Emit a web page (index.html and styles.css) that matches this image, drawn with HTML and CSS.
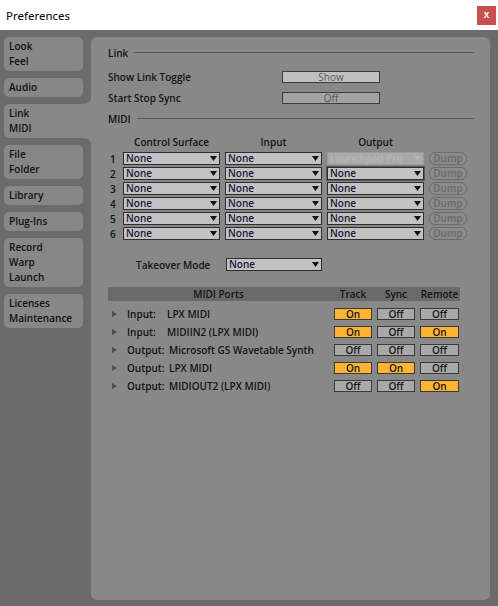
FILE: index.html
```html
<!DOCTYPE html>
<html>
<head>
<meta charset="utf-8">
<title>Preferences</title>
<link rel="stylesheet" href="styles.css">
</head>
<body>
<div class="titlebar">
  <span class="title">Preferences</span>
  <div class="close">x</div>
</div>
<div class="window">
  <nav class="sidebar">
    <div class="tab">Look<br>Feel</div>
    <div class="tab">Audio</div>
    <div class="tab active">Link<br>MIDI</div>
    <div class="tab">File<br>Folder</div>
    <div class="tab">Library</div>
    <div class="tab">Plug-Ins</div>
    <div class="tab">Record<br>Warp<br>Launch</div>
    <div class="tab">Licenses<br>Maintenance</div>
  </nav>
  <main class="panel">
    <div class="sec-head"><span>Link</span><div class="rule"></div></div>
    <div class="setting first">
      <span>Show Link Toggle</span>
      <div class="btn light">Show</div>
    </div>
    <div class="setting">
      <span>Start Stop Sync</span>
      <div class="btn dark">Off</div>
    </div>
    <div class="sec-head midi"><span>MIDI</span><div class="rule"></div></div>

    <div class="midi-grid head">
      <span></span><span class="ch">Control Surface</span><span class="ch">Input</span><span class="ch">Output</span><span></span>
    </div>
    <div class="midi-grid rows">
      <span class="num">1</span>
      <div class="sel"><span>None</span><svg class="arr" viewBox="0 0 7 5"><polygon points="0,0 7,0 3.5,5"/></svg></div>
      <div class="sel"><span>None</span><svg class="arr" viewBox="0 0 7 5"><polygon points="0,0 7,0 3.5,5"/></svg></div>
      <div class="sel disabled"><span>Launchpad Pro</span><svg class="arr" viewBox="0 0 7 5"><polygon points="0,0 7,0 3.5,5"/></svg></div>
      <div class="dump">Dump</div>

      <span class="num">2</span>
      <div class="sel"><span>None</span><svg class="arr" viewBox="0 0 7 5"><polygon points="0,0 7,0 3.5,5"/></svg></div>
      <div class="sel"><span>None</span><svg class="arr" viewBox="0 0 7 5"><polygon points="0,0 7,0 3.5,5"/></svg></div>
      <div class="sel focus"><span>None</span><svg class="arr" viewBox="0 0 7 5"><polygon points="0,0 7,0 3.5,5"/></svg></div>
      <div class="dump">Dump</div>

      <span class="num">3</span>
      <div class="sel"><span>None</span><svg class="arr" viewBox="0 0 7 5"><polygon points="0,0 7,0 3.5,5"/></svg></div>
      <div class="sel"><span>None</span><svg class="arr" viewBox="0 0 7 5"><polygon points="0,0 7,0 3.5,5"/></svg></div>
      <div class="sel"><span>None</span><svg class="arr" viewBox="0 0 7 5"><polygon points="0,0 7,0 3.5,5"/></svg></div>
      <div class="dump">Dump</div>

      <span class="num">4</span>
      <div class="sel"><span>None</span><svg class="arr" viewBox="0 0 7 5"><polygon points="0,0 7,0 3.5,5"/></svg></div>
      <div class="sel"><span>None</span><svg class="arr" viewBox="0 0 7 5"><polygon points="0,0 7,0 3.5,5"/></svg></div>
      <div class="sel"><span>None</span><svg class="arr" viewBox="0 0 7 5"><polygon points="0,0 7,0 3.5,5"/></svg></div>
      <div class="dump">Dump</div>

      <span class="num">5</span>
      <div class="sel"><span>None</span><svg class="arr" viewBox="0 0 7 5"><polygon points="0,0 7,0 3.5,5"/></svg></div>
      <div class="sel"><span>None</span><svg class="arr" viewBox="0 0 7 5"><polygon points="0,0 7,0 3.5,5"/></svg></div>
      <div class="sel"><span>None</span><svg class="arr" viewBox="0 0 7 5"><polygon points="0,0 7,0 3.5,5"/></svg></div>
      <div class="dump">Dump</div>

      <span class="num">6</span>
      <div class="sel"><span>None</span><svg class="arr" viewBox="0 0 7 5"><polygon points="0,0 7,0 3.5,5"/></svg></div>
      <div class="sel"><span>None</span><svg class="arr" viewBox="0 0 7 5"><polygon points="0,0 7,0 3.5,5"/></svg></div>
      <div class="sel"><span>None</span><svg class="arr" viewBox="0 0 7 5"><polygon points="0,0 7,0 3.5,5"/></svg></div>
      <div class="dump">Dump</div>
    </div>

    <div class="takeover">
      <span class="tk-label">Takeover Mode</span>
      <div class="sel"><span>None</span><svg class="arr" viewBox="0 0 7 5"><polygon points="0,0 7,0 3.5,5"/></svg></div>
    </div>

    <div class="ports">
      <div class="ports-head">
        <span>MIDI Ports</span><span>Track</span><span>Sync</span><span>Remote</span>
      </div>
      <div class="port">
        <div class="pname"><svg class="tri" viewBox="0 0 5 6"><polygon points="0,0 5,3 0,6"/></svg><span class="kind">Input:</span><span>LPX MIDI</span></div>
        <div class="tg on">On</div><div class="tg">Off</div><div class="tg">Off</div>
      </div>
      <div class="port">
        <div class="pname"><svg class="tri" viewBox="0 0 5 6"><polygon points="0,0 5,3 0,6"/></svg><span class="kind">Input:</span><span>MIDIIN2 (LPX MIDI)</span></div>
        <div class="tg on">On</div><div class="tg">Off</div><div class="tg on">On</div>
      </div>
      <div class="port">
        <div class="pname"><svg class="tri" viewBox="0 0 5 6"><polygon points="0,0 5,3 0,6"/></svg><span class="kind out">Output:</span><span>Microsoft GS Wavetable Synth</span></div>
        <div class="tg">Off</div><div class="tg">Off</div><div class="tg">Off</div>
      </div>
      <div class="port">
        <div class="pname"><svg class="tri" viewBox="0 0 5 6"><polygon points="0,0 5,3 0,6"/></svg><span class="kind out">Output:</span><span>LPX MIDI</span></div>
        <div class="tg on">On</div><div class="tg on">On</div><div class="tg">Off</div>
      </div>
      <div class="port">
        <div class="pname"><svg class="tri" viewBox="0 0 5 6"><polygon points="0,0 5,3 0,6"/></svg><span class="kind out">Output:</span><span>MIDIOUT2 (LPX MIDI)</span></div>
        <div class="tg">Off</div><div class="tg">Off</div><div class="tg on">On</div>
      </div>
    </div>
  </main>
</div>
</body>
</html>
```
FILE: styles.css
```css
html, body {
  margin: 0;
  padding: 0;
}
body {
  width: 498px;
  height: 606px;
  background: #6b6b6b;
  font-family: "Open Sans", "Liberation Sans", Arial, sans-serif;
  font-weight: 600;
  font-size: 10px;
  color: #141414;
  overflow: hidden;
}

.titlebar {
  height: 30px;
  background: #ffffff;
  display: flex;
  align-items: center;
  justify-content: space-between;
  padding: 0 2px 0 6px;
}
.title {
  font-family: "Noto Sans", "Liberation Sans", sans-serif;
  font-weight: 400;
  font-size: 11.5px;
  color: #000;
}
.close {
  width: 19px;
  height: 19px;
  background: #c75050;
  color: #fff;
  font-family: "Liberation Sans", Arial, sans-serif;
  font-weight: bold;
  font-size: 10px;
  display: flex;
  align-items: center;
  justify-content: center;
  line-height: 1;
}

.window {
  display: flex;
  padding: 7px 8px 6px 4px;
  height: 563px;
}

.sidebar {
  width: 79px;
  display: flex;
  flex-direction: column;
  gap: 7px;
  flex-shrink: 0;
}
.tab {
  background: #878787;
  border-radius: 5px;
  padding: 2px 0 2px 5px;
  line-height: 15px;
  color: #111;
}
.tab.active {
  position: relative;
  margin-right: -8px;
  border-radius: 5px 0 0 5px;
  background: #888888;
}
.tab.active::before,
.tab.active::after {
  content: "";
  position: absolute;
  right: 0;
  width: 8px;
  height: 6px;
}
.tab.active::before {
  top: -6px;
  background: radial-gradient(circle at 2px 0, transparent 5.5px, #888888 6px);
}
.tab.active::after {
  bottom: -6px;
  background: radial-gradient(circle at 2px 6px, transparent 5.5px, #888888 6px);
}

.panel {
  margin-left: 8px;
  width: 399px;
  height: 563px;
  background: #888888;
  border-radius: 6px;
  padding: 8px 16px 0 17px;
  box-sizing: border-box;
}

.sec-head {
  display: flex;
  align-items: center;
  gap: 6px;
  height: 15px;
  color: #111;
}
.sec-head .rule {
  flex: 1;
  height: 1px;
  background: #585858;
}
.sec-head.midi {
  margin-top: 8px;
}

.setting {
  display: grid;
  grid-template-columns: 174px 98px;
  align-items: center;
  height: 12px;
  margin-top: 9px;
}
.setting.first {
  margin-top: 10px;
}
.btn {
  height: 12px;
  box-sizing: border-box;
  border: 1px solid #3c3c3c;
  display: flex;
  align-items: center;
  justify-content: center;
  color: #585858;
  line-height: 10px;
  font-weight: 400;
}
.btn.light { background: #c0c0c0; }
.btn.dark { background: #a3a3a3; }

.midi-grid {
  display: grid;
  grid-template-columns: 10px 97px 97px 97px 38px;
  column-gap: 5px;
}
.midi-grid.head {
  margin-top: 8px;
  height: 15px;
  align-items: center;
  margin-bottom: 3px;
}
.ch {
  text-align: center;
}
.midi-grid.rows {
  row-gap: 2px;
  grid-auto-rows: 13px;
}
.num {
  padding-left: 2px;
  display: flex;
  align-items: center;
}

.sel {
  height: 13px;
  box-sizing: border-box;
  background: #c2c2c2;
  border: 1px solid #2e2e2e;
  display: flex;
  align-items: center;
  justify-content: space-between;
  padding: 0 2px 0 2px;
  color: #1b1838;
  line-height: 11px;
}
.sel .arr {
  width: 7px;
  height: 5px;
  fill: #111;
}
.sel.disabled {
  background: #a9a9a9;
  border-color: #9c9c9c;
  color: #b6b6b6;
}
.sel.disabled .arr {
  fill: #b6b6b6;
}
.sel.focus {
  box-shadow: 0 0 0 1px #5a5a5a;
}

.dump {
  height: 13px;
  box-sizing: border-box;
  border: 1px solid #6c6c6c;
  border-radius: 6px;
  color: #6a6a6a;
  background: #8b8b8b;
  display: flex;
  align-items: center;
  justify-content: center;
  line-height: 11px;
}

.takeover {
  display: flex;
  align-items: center;
  margin-top: 18px;
  height: 13px;
}
.tk-label {
  width: 118px;
  padding-left: 28px;
  box-sizing: border-box;
}
.takeover .sel {
  width: 96px;
}

.ports {
  margin-top: 16px;
  width: 352px;
  display: flex;
  flex-direction: column;
  gap: 6px;
}
.ports-head,
.port {
  display: grid;
  grid-template-columns: 221px 38px 38px 39px;
  column-gap: 5px;
  align-items: center;
}
.ports-head {
  height: 14px;
  background: #6a6a6a;
  color: #151515;
  text-align: center;
}
.port {
  height: 12px;
}
.pname {
  display: flex;
  align-items: center;
}
.tri {
  width: 5px;
  height: 6px;
  fill: #4e4e4e;
  margin-left: 4px;
  margin-right: 10px;
}
.kind {
  min-width: 40px;
}
.kind.out {
  min-width: 42px;
}
.tg {
  height: 12px;
  box-sizing: border-box;
  border: 1px solid #3a3a3a;
  background: #a9a9a9;
  display: flex;
  align-items: center;
  justify-content: center;
  line-height: 10px;
  color: #161616;
}
.tg.on {
  background: #ffb532;
}
```
